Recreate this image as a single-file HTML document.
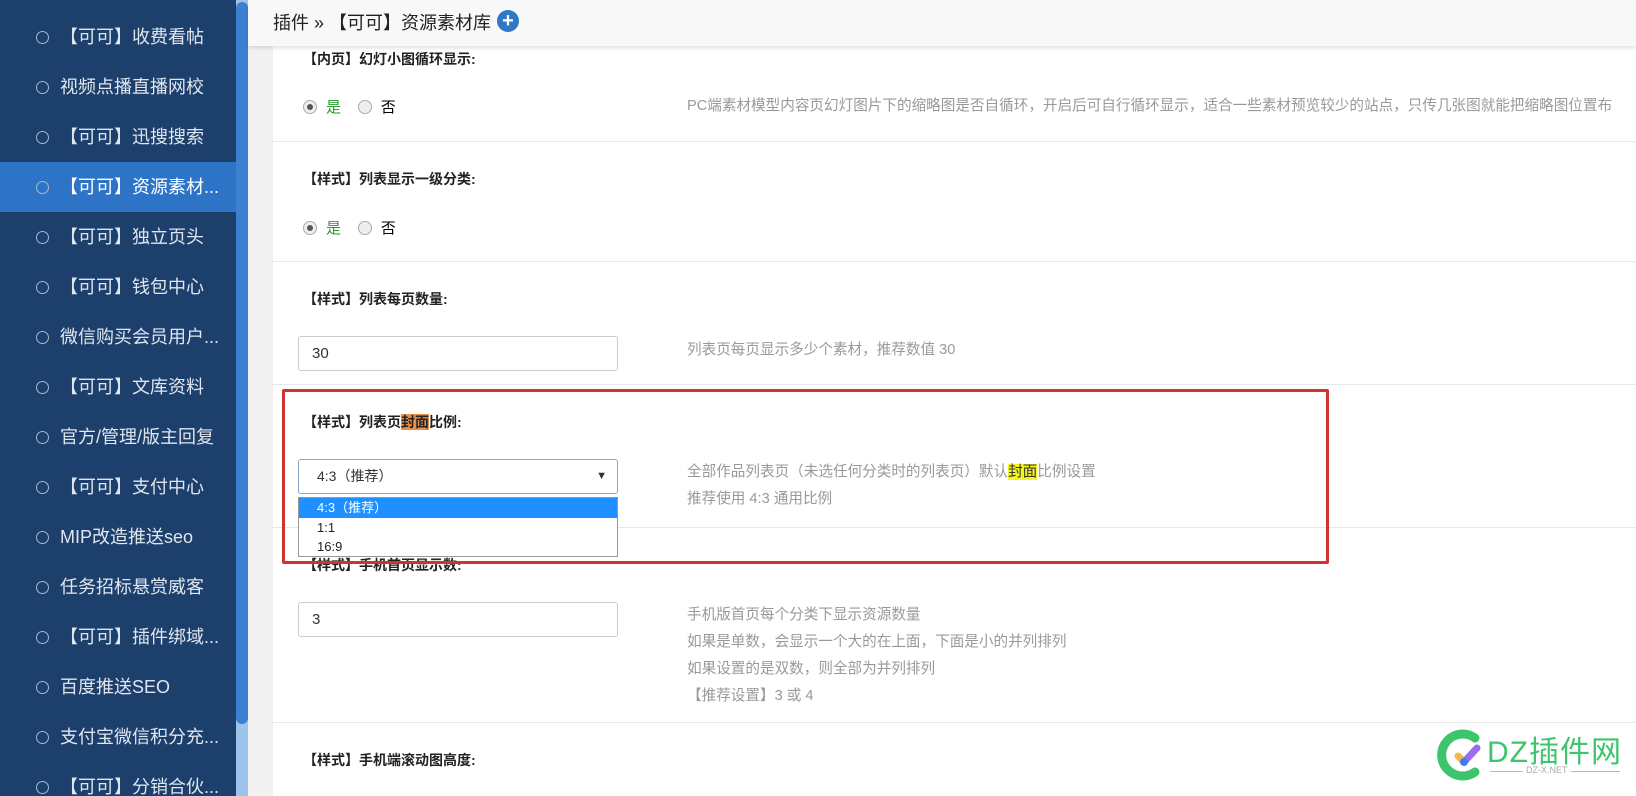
<!DOCTYPE html>
<html style="overflow:hidden;background:#fff"><head><meta charset="utf-8"><style>
*{margin:0;padding:0;box-sizing:border-box}
body{width:1636px;height:796px;overflow:hidden;background:#fff;font-family:"Liberation Sans","Noto Sans CJK SC",sans-serif;position:relative}
.side{position:absolute;left:0;top:0;width:236px;height:830px;background:#1d3f6c}
.item{position:absolute;left:0;width:236px;height:50px;line-height:50px;color:#dfe6ef;font-size:18px;padding-left:60px;white-space:nowrap}
.item:before{content:"";position:absolute;left:36px;top:19px;width:11px;height:11px;border:1px solid #aab8cc;border-radius:50%}
.item.act{background:#2e74c6;color:#fff}
.sb{position:absolute;left:236px;top:0;width:12px;height:830px;background:#9ec3ea}
.gap{position:absolute;left:248px;top:0;width:25px;height:830px;background:#f1f1f1}
.thumb{position:absolute;left:236px;top:2px;width:12px;height:722px;background:#3b80d1;border-radius:6px}
.head{position:absolute;left:248px;top:0;width:1388px;height:46px;background:#f8f8f8;box-shadow:0 2px 4px rgba(0,0,0,.12);z-index:3;font-size:18px;color:#222;line-height:46px;padding-left:25px}
.plus{display:inline-block;width:22px;height:22px;border-radius:50%;background:#2f78c6;color:#fff;text-align:center;line-height:22px;font-weight:bold;font-size:20px;vertical-align:2px;margin-left:6px}
.sep{position:absolute;left:273px;width:1363px;height:1px;background:#e8e8e8}
.lbl{position:absolute;left:303px;font-size:14px;font-weight:bold;color:#222}
.rad{position:absolute;left:303px;font-size:15px}
.r{display:inline-block;width:14px;height:14px;border:1px solid #aaa;border-radius:50%;background:#eee;vertical-align:-2px;margin-right:9px;position:relative}
.r.on:after{content:"";position:absolute;left:3px;top:3px;width:6px;height:6px;border-radius:50%;background:#555}
.inp{position:absolute;left:298px;width:320px;height:35px;border:1px solid #ccc;border-radius:3px;font-size:15px;line-height:33px;padding-left:13px;color:#333;background:#fff}
.desc{position:absolute;left:687px;font-size:14.6px;color:#999;line-height:27px;white-space:nowrap}
.red{position:absolute;left:282px;top:389px;width:1047px;height:175px;border:3px solid #d0332e;border-radius:2px;z-index:2}
.dd{position:absolute;left:298px;top:497px;width:320px;height:60px;border:1px solid #999;background:#fff;font-size:13px;z-index:4}
.dd div{height:19.5px;line-height:19.5px;padding-left:18px;color:#222}
</style></head><body>
<div class="side">
<div class="item" style="top:12px">【可可】收费看帖</div>
<div class="item" style="top:62px">视频点播直播网校</div>
<div class="item" style="top:112px">【可可】迅搜搜索</div>
<div class="item act" style="top:162px">【可可】资源素材...</div>
<div class="item" style="top:212px">【可可】独立页头</div>
<div class="item" style="top:262px">【可可】钱包中心</div>
<div class="item" style="top:312px">微信购买会员用户...</div>
<div class="item" style="top:362px">【可可】文库资料</div>
<div class="item" style="top:412px">官方/管理/版主回复</div>
<div class="item" style="top:462px">【可可】支付中心</div>
<div class="item" style="top:512px">MIP改造推送seo</div>
<div class="item" style="top:562px">任务招标悬赏威客</div>
<div class="item" style="top:612px">【可可】插件绑域...</div>
<div class="item" style="top:662px">百度推送SEO</div>
<div class="item" style="top:712px">支付宝微信积分充...</div>
<div class="item" style="top:762px">【可可】分销合伙...</div>
</div>
<div class="sb"></div><div class="thumb"></div><div class="gap"></div>
<div class="head">插件 » 【可可】资源素材库<span class="plus">+</span></div>

<div class="lbl" style="top:49px">【内页】幻灯小图循环显示:</div>
<div class="rad" style="top:96px"><span class="r on"></span><span style="color:#2a9a2a">是</span>&nbsp;&nbsp;&nbsp;&nbsp;<span class="r"></span>否</div>
<div class="desc" style="top:93px">PC端素材模型内容页幻灯图片下的缩略图是否自循环，开启后可自行循环显示，适合一些素材预览较少的站点，只传几张图就能把缩略图位置布</div>
<div class="sep" style="top:141px"></div>

<div class="lbl" style="top:169px">【样式】列表显示一级分类:</div>
<div class="rad" style="top:217px"><span class="r on"></span><span style="color:#2a9a2a">是</span>&nbsp;&nbsp;&nbsp;&nbsp;<span class="r"></span>否</div>
<div class="sep" style="top:261px"></div>

<div class="lbl" style="top:289px">【样式】列表每页数量:</div>
<div class="inp" style="top:336px">30</div>
<div class="desc" style="top:337px">列表页每页显示多少个素材，推荐数值 30</div>
<div class="sep" style="top:384px"></div>

<div class="lbl" style="top:412px">【样式】列表页<span style="background:#e8904a">封面</span>比例:</div>
<div class="inp" style="top:459px;border-color:#8aa6c8;padding-left:18px;font-size:14px">4:3（推荐）<span style="position:absolute;right:10px;font-size:11px">▼</span></div>
<div class="dd"><div style="background:#1e90ff;color:#fff">4:3（推荐）</div><div>1:1</div><div>16:9</div></div>
<div class="desc" style="top:459px">全部作品列表页（未选任何分类时的列表页）默认<span style="background:#f5f51e;color:#333">封面</span>比例设置<br>推荐使用 4:3 通用比例</div>
<div class="sep" style="top:527px"></div>
<div class="red"></div>

<div class="lbl" style="top:555px">【样式】手机首页显示数:</div>
<div class="inp" style="top:602px">3</div>
<div class="desc" style="top:602px">手机版首页每个分类下显示资源数量<br>如果是单数，会显示一个大的在上面，下面是小的并列排列<br>如果设置的是双数，则全部为并列排列<br>【推荐设置】3 或 4</div>
<div class="sep" style="top:722px"></div>

<div class="lbl" style="top:750px">【样式】手机端滚动图高度:</div>

<div style="position:absolute;left:1435px;top:728px;width:190px;height:56px">
<svg width="56" height="56" style="position:absolute;left:0;top:0"><path d="M40 10 A21 21 0 1 0 40 44" stroke="#3dc56e" stroke-width="9" fill="none" stroke-linecap="round"/><line x1="23" y1="28" x2="29" y2="34" stroke="#f5b642" stroke-width="7" stroke-linecap="round"/><line x1="29" y1="34" x2="42" y2="20" stroke="#9b6cf0" stroke-width="7" stroke-linecap="round"/><circle cx="29" cy="34" r="4" fill="#3d7df0"/></svg>
<div style="position:absolute;left:52px;top:-1px;font-size:30px;color:#3dc56e;white-space:nowrap;letter-spacing:1px">DZ插件网</div>
<div style="position:absolute;left:55px;top:43px;width:130px;height:1px;background:#b9b0d8"></div>
<div style="position:absolute;left:88px;top:37px;font-size:9px;color:#aaa;background:#fff;padding:0 3px">DZ-X.NET</div>
</div>
</body></html>
